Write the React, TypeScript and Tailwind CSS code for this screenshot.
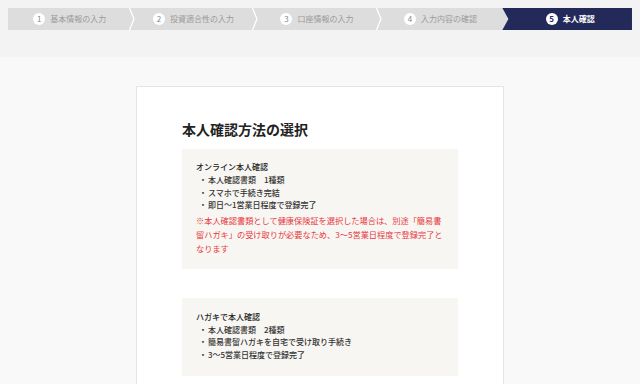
import React from 'react';

const steps = ['基本情報の入力', '投資適合性の入力', '口座情報の入力', '入力内容の確認', '本人確認'];

function Chevron() {
  return (
    <svg className="absolute right-[-3px] top-0 h-[22px] w-[6px]" viewBox="0 0 6 22">
      <polyline points="0.5,0 5,11 0.5,22" fill="none" stroke="#ffffff" strokeWidth="1.3" />
    </svg>
  );
}

function StepBar() {
  return (
    <div className="flex h-[22px] bg-[#dddddd]">
      {steps.map((label, i) => {
        const active = i === steps.length - 1;
        if (active) {
          return (
            <div
              key={label}
              className="flex flex-1 items-center justify-center gap-[5px] bg-[#232958] pl-[6px] [clip-path:polygon(0_0,100%_0,100%_100%,0_100%,6px_50%)]"
            >
              <span className="flex h-[12px] w-[12px] items-center justify-center rounded-full bg-white text-[8px] font-bold leading-none text-[#232958]">
                {i + 1}
              </span>
              <span className="text-[8px] font-bold leading-none text-white">{label}</span>
            </div>
          );
        }
        return (
          <div key={label} className="relative flex flex-1 items-center justify-center gap-[5px]">
            <span className="flex h-[12px] w-[12px] items-center justify-center rounded-full bg-white text-[8px] leading-none text-[#888888]">
              {i + 1}
            </span>
            <span className="text-[8px] leading-none text-[#9a9a9a]">{label}</span>
            {i < steps.length - 2 && <Chevron />}
          </div>
        );
      })}
    </div>
  );
}

function Bullet({ children }: { children: React.ReactNode }) {
  return (
    <div className="flex h-[12.5px] items-center pl-[3px] font-medium">
      <span className="w-[9px]">・</span>
      <span>{children}</span>
    </div>
  );
}

export default function App() {
  return (
    <div
      className="min-h-[384px] bg-[#f9f9f9] text-[#333333]"
      style={{ fontFamily: '"Noto Sans CJK JP", "Noto Sans", sans-serif' }}
    >
      <div className="h-[57px] bg-[#f3f3f3] px-[8px] pt-[8px]">
        <StepBar />
      </div>

      <div className="mx-auto mt-[29px] w-[368px] border border-[#e4e4e4] bg-white px-[45px] pb-[20px] pt-[32px]">
        <h1 className="text-[14px] font-bold leading-[20px] text-[#222222]">本人確認方法の選択</h1>

        <div className="mt-[10px] bg-[#f7f6f2] px-[14px] pb-[14px] pt-[12px] text-[8px] leading-[12px]">
          <div className="font-medium text-[#222222]">オンライン本人確認</div>
          <div className="mt-[1px]">
            <Bullet>本人確認書類　1種類</Bullet>
            <Bullet>スマホで手続き完結</Bullet>
            <Bullet>即日〜1営業日程度で登録完了</Bullet>
          </div>
          <p className="mt-[1px] whitespace-nowrap text-[8.2px] leading-[14px] text-[#e8383d]">
            ※本人確認書類として健康保険証を選択した場合は、別途「簡易書
            <br />
            留ハガキ」の受け取りが必要なため、3〜5営業日程度で登録完了と
            <br />
            なります
          </p>
        </div>

        <div className="mt-[29px] bg-[#f7f6f2] px-[14px] pb-[15px] pt-[13px] text-[8px] leading-[12px]">
          <div className="font-medium text-[#222222]">ハガキで本人確認</div>
          <div className="mt-[1px]">
            <Bullet>本人確認書類　2種類</Bullet>
            <Bullet>簡易書留ハガキを自宅で受け取り手続き</Bullet>
            <Bullet>3〜5営業日程度で登録完了</Bullet>
          </div>
        </div>
      </div>
    </div>
  );
}
